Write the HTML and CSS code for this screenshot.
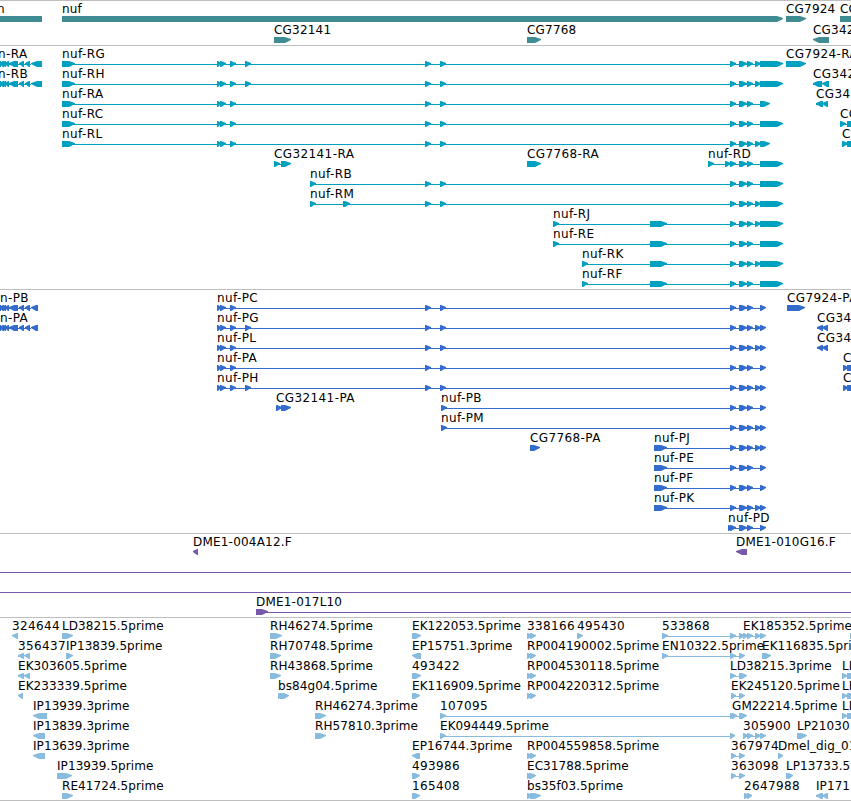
FILE: index.html
```html
<!DOCTYPE html>
<html lang="en">
<head>
<meta charset="UTF-8">
<title>nuf</title>
<link rel="stylesheet" href="styles.css">
</head>
<body>
<div class="browser">
  <div class="track gene" id="gene"></div>
  <div class="track transcript" id="transcript"></div>
  <div class="track cds" id="cds"></div>
  <div class="track bac" id="bac"></div>
  <div class="track est" id="est"></div>
</div>
<script src="tracks.js"></script>
</body>
</html>
```
FILE: styles.css
```css
* {
  box-sizing: border-box;
}

body {
  margin: 0;
  background: #fff;
  color: #000;
  font-family: "DejaVu Sans", sans-serif;
  font-size: 12px;
}

.browser {
  width: 851px;
  overflow: hidden;
  border-bottom: 1px solid #bebebe;
}

.track {
  border-top: 1px solid #bebebe;
  padding-bottom: 3px;
}

.gene { color: #408c93; }
.transcript { color: #00a0c0; }
.cds { color: #336ccc; }
.bac { color: #7858a8; }
.est { color: #88bbdd; padding-bottom: 2px; }

.row {
  position: relative;
  height: 20px;
}

.gene .row:first-child {
  height: 21px;
}

/* labels start at the feature's own coordinate */
.label {
  position: absolute;
  top: 0;
  height: 16px;
  line-height: 16px;
  letter-spacing: 0.2px;
  white-space: nowrap;
  color: #000;
}

.transcript .label,
.cds .label {
  letter-spacing: 0.4px;
}

.est .label {
  letter-spacing: 0.08px;
}

.est .number {
  letter-spacing: 0.35px;
}

.glyphs {
  position: absolute;
  left: 0;
  top: 14px;
  display: block;
  width: 851px;
  height: 8px;
  fill: currentColor;
}
```
FILE: tracks.js
```js
// one string per row, features separated by "|":
//   label @ labelX strand exon,exon,...
var MID = '425-431,440-446,';
var NEAR = '730-736,739-747,747-753,';
var LEFT = '217-221,220-226,230-236,';
var LEFT4 = LEFT + '245-251,';
var LONG = '760-783';
var N_EXONS = '-4-1,-1-4,2-6,5-9,9-18,19-24,25-30,';

var tracks = {
  gene: [
    'n@-3 - -20-42|nuf@62 + 62-783|CG7924@786 + 786-806|CG@840 + 840-870',
    'CG32141@274 + 274-291|CG7768@527 + 527-541|CG342@813 - 813-829'
  ],
  transcript: [
    'n-RA@-2 - ' + N_EXONS + '31-42|nuf-RG@62 + 62-75,' + LEFT4 + MID + NEAR + '755-761,' + LONG + '|CG7924-RA@786 + 786-806',
    'n-RB@-2 - ' + N_EXONS + '31-42|nuf-RH@62 + 62-75,' + LEFT4 + MID + NEAR + '755-761,' + LONG + '|CG342@813 - 813-822,822-829',
    'nuf-RA@62 + 62-75,' + LEFT + MID + NEAR + '760-770|CG342@816 - 816-823,822-828',
    'nuf-RC@62 + 62-75,' + LEFT + MID + NEAR + LONG + '|CG@840 + 840-846,847-870',
    'nuf-RL@62 + 62-75,' + LEFT + MID + NEAR + '755-761,760-770|C@842 + 842-848,847-870',
    'CG32141-RA@274 + 274-280,281-291|CG7768-RA@527 + 527-541|nuf-RD@708 + 708-714,725-731,' + NEAR + LONG,
    'nuf-RB@310 + 310-316,' + MID + NEAR + LONG,
    'nuf-RM@310 + 310-316,343-350,' + MID + NEAR + '755-761,' + LONG,
    'nuf-RJ@553 + 553-559,650-667,' + NEAR + '755-761,' + LONG,
    'nuf-RE@553 + 553-559,650-667,' + NEAR + LONG,
    'nuf-RK@582 + 582-588,650-667,' + NEAR + '755-761,' + LONG,
    'nuf-RF@582 + 582-588,650-667,' + NEAR + LONG
  ],
  cds: [
    'n-PB@0 - ' + N_EXONS + '31-38|nuf-PC@217 + ' + LEFT + MID + NEAR + '760-766|CG7924-PA@787 + 787-805',
    'n-PA@0 - ' + N_EXONS + '31-38|nuf-PG@217 + ' + LEFT4 + MID + NEAR + '755-761,760-766|CG34@817 - 817-823,822-828',
    'nuf-PL@217 + ' + LEFT + MID + NEAR + '755-761,760-766|CG34@817 - 817-823,822-828',
    'nuf-PA@217 + ' + LEFT + MID + NEAR + '760-766|C@843 + 843-848,847-870',
    'nuf-PH@217 + ' + LEFT4 + MID + NEAR + '755-761,760-766|C@843 + 843-848,847-870',
    'CG32141-PA@276 + 276-282,281-291|nuf-PB@441 + 441-447,' + NEAR + '760-766',
    'nuf-PM@441 + 441-447,' + NEAR + '755-761,760-766',
    'CG7768-PA@530 + 530-540|nuf-PJ@654 + 654-667,' + NEAR + '755-761,760-766',
    'nuf-PE@654 + 654-667,' + NEAR + '760-766',
    'nuf-PF@654 + 654-667,' + NEAR + '760-766',
    'nuf-PK@654 + 654-667,' + NEAR + '755-761,760-766',
    'nuf-PD@728 + 728-732,' + NEAR + '760-766'
  ],
  bac: [
    'DME1-004A12.F@193 - 193-198|DME1-010G16.F@736 - 736-747',
    '@0 + -20--10,860-870',
    '@0 + -20--10,860-870',
    'DME1-017L10@256 + 256-268,860-870'
  ],
  est: [
    '324644@12 - 12-18|LD38215.5prime@62 + 62-73|RH46274.5prime@270 + 270-282|EK122053.5prime@412 + 412-421|338166@527 + 527-532,530-536|495430@577 + 577-583|533868@662 + 662-668,730-736,739-745|EK185352.5prime@743 + 743-748,747-753,755-761,760-766|@850 + 850-870',
    '356437@18 - 18-24,24-30|IP13839.5prime@66 + 66-73|RH70748.5prime@270 + 270-281|EP15751.3prime@412 - 412-421|RP004190002.5prime@527 + 527-532,530-536|EN10322.5prime@662 + 662-668,730-736,739-745|EK116835.5prime@762 + 762-771',
    'EK303605.5prime@18 - 18-24,24-30|RH43868.5prime@270 + 270-281|493422@412 + 412-421|RP004530118.5prime@527 + 527-532,530-536|LD38215.3prime@730 + 730-736,739-747|LP@842 + 842-847,847-870',
    'EK233339.5prime@18 - 18-23|bs84g04.5prime@278 + 278-282,280-289|EK116909.5prime@412 + 412-420|RP004220312.5prime@527 + 527-532,530-536|EK245120.5prime@731 + 731-736,739-745|LP@842 + 842-847,847-870',
    'IP13939.3prime@33 - 33-47|RH46274.3prime@315 + 315-326|107095@440 + 440-446,730-736|GM22214.5prime@732 + 732-737,739-747|LP@842 + 842-847,847-870',
    'IP13839.3prime@33 - 33-45|RH57810.3prime@315 + 315-326|EK094449.5prime@440 + 440-446,730-735|305900@743 + 743-748,747-753,755-761,760-766|LP21030@797 + 797-807',
    'IP13639.3prime@33 - 33-45|EP16744.3prime@412 - 412-420|RP004559858.5prime@527 + 527-532,530-536|367974@731 + 731-736,739-745|Dmel_dig_01@778 + 778-783',
    'IP13939.5prime@57 + 57-72|493986@412 + 412-420|EC31788.5prime@527 + 527-531,529-536|363098@731 + 731-736,739-745|LP13733.5@786 + 786-790,788-793',
    'RE41724.5prime@62 + 62-73|165408@412 + 412-420|bs35f03.5prime@527 + 527-532,530-541|2647988@744 + 744-749,747-752|IP171@816 - 816-823,822-828'
  ]
};

// block with a pointed end in the direction of the strand
function exonPath(start, end, strand) {
  var width = end - start;
  var head = width > 9 ? 6 : Math.min(5, width - 1);
  if (strand === '-') {
    return 'M' + end + ' 1H' + (start + head) + 'L' + start + ' 3V4L' + (start + head) + ' 7H' + end + 'Z';
  }
  return 'M' + start + ' 1H' + (end - head) + 'L' + end + ' 3V4L' + (end - head) + ' 7H' + start + 'Z';
}

function drawRow(line) {
  var labels = '';
  var shapes = '';
  line.split('|').forEach(function (feature) {
    var f = feature.match(/^(.*)@(-?\d+) ([+-]) (.*)$/);
    var exons = f[4].split(',').map(function (exon) {
      var e = exon.match(/^(-?\d+)-(-?\d+)$/);
      return [Number(e[1]), Number(e[2])];
    });
    var first = exons[0][0];
    var last = exons[exons.length - 1][0];
    if (f[1]) {
      labels += '<span class="label' + (/^\d+$/.test(f[1]) ? ' number' : '') + '" style="left:' + f[2] + 'px">' + f[1] + '</span>';
    }
    if (exons.length > 1) {
      shapes += '<path d="M' + first + ' 4H' + last + 'V5H' + first + 'Z"/>';
    }
    exons.forEach(function (e) {
      shapes += '<path d="' + exonPath(e[0], e[1], f[3]) + '"/>';
    });
  });
  return '<div class="row"><svg class="glyphs" viewBox="0 0 851 8">' + shapes + '</svg>' + labels + '</div>';
}

Object.keys(tracks).forEach(function (id) {
  document.getElementById(id).innerHTML = tracks[id].map(drawRow).join('');
});
```
